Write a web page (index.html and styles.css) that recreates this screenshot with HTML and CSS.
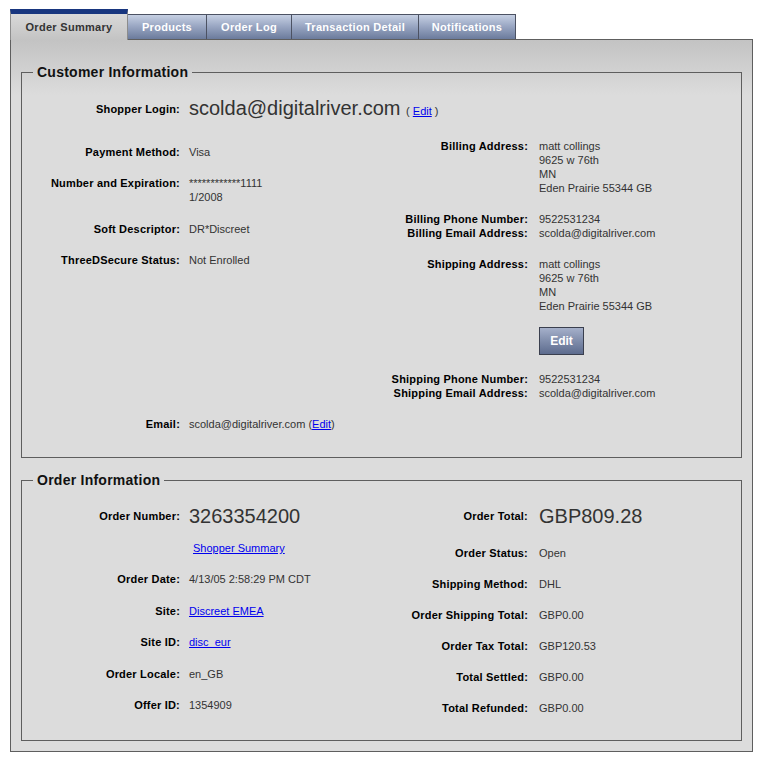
FILE: index.html
```html
<!DOCTYPE html>
<html>
<head>
<meta charset="utf-8">
<title>Order Summary</title>
<link rel="stylesheet" href="styles.css">
</head>
<body>
<div class="page">
  <ul class="tabs">
    <li class="tab active tab-summary">Order Summary</li>
    <li class="tab tab-products">Products</li>
    <li class="tab tab-log">Order Log</li>
    <li class="tab tab-detail">Transaction Detail</li>
    <li class="tab tab-notes">Notifications</li>
  </ul>
  <div class="panel">
    <fieldset class="group customer">
      <legend>Customer Information</legend>
      <div class="body">
        <div class="row big">
          <div class="label">Shopper Login:</div>
          <div class="value big-value">scolda@digitalriver.com <span class="small">( <a href="#">Edit</a> )</span></div>
        </div>
        <div class="cols">
          <div class="col left">
            <div class="row"><div class="label">Payment Method:</div><div class="value">Visa</div></div>
            <div class="row"><div class="label">Number and Expiration:</div><div class="value">************1111<br>1/2008</div></div>
            <div class="row gap-plus"><div class="label">Soft Descriptor:</div><div class="value">DR*Discreet</div></div>
            <div class="row"><div class="label">ThreeDSecure Status:</div><div class="value">Not Enrolled</div></div>
          </div>
          <div class="col right">
            <div class="row"><div class="label">Billing Address:</div><div class="value">matt collings<br>9625 w 76th<br>MN<br>Eden Prairie 55344 GB</div></div>
            <div class="stack">
              <div class="row"><div class="label">Billing Phone Number:</div><div class="value">9522531234</div></div>
              <div class="row"><div class="label">Billing Email Address:</div><div class="value">scolda@digitalriver.com</div></div>
            </div>
            <div class="stack">
              <div class="row"><div class="label">Shipping Address:</div><div class="value">matt collings<br>9625 w 76th<br>MN<br>Eden Prairie 55344 GB</div></div>
              <div class="row button-row"><div class="label"></div><div class="value"><button class="btn" type="button">Edit</button></div></div>
            </div>
            <div class="stack">
              <div class="row"><div class="label">Shipping Phone Number:</div><div class="value">9522531234</div></div>
              <div class="row"><div class="label">Shipping Email Address:</div><div class="value">scolda@digitalriver.com</div></div>
            </div>
          </div>
        </div>
        <div class="row email-row"><div class="label">Email:</div><div class="value">scolda@digitalriver.com (<a href="#">Edit</a>)</div></div>
      </div>
    </fieldset>

    <fieldset class="group order">
      <legend>Order Information</legend>
      <div class="body">
        <div class="cols">
          <div class="col left">
            <div class="row big"><div class="label">Order Number:</div><div class="value big-value">3263354200</div></div>
            <div class="row"><div class="label"></div><div class="value indent"><a href="#">Shopper Summary</a></div></div>
            <div class="row"><div class="label">Order Date:</div><div class="value">4/13/05 2:58:29 PM CDT</div></div>
            <div class="row"><div class="label">Site:</div><div class="value"><a href="#">Discreet EMEA</a></div></div>
            <div class="row"><div class="label">Site ID:</div><div class="value"><a href="#">disc_eur</a></div></div>
            <div class="row"><div class="label">Order Locale:</div><div class="value">en_GB</div></div>
            <div class="row"><div class="label">Offer ID:</div><div class="value">1354909</div></div>
          </div>
          <div class="col right">
            <div class="row big"><div class="label">Order Total:</div><div class="value big-value">GBP809.28</div></div>
            <div class="row"><div class="label">Order Status:</div><div class="value">Open</div></div>
            <div class="row"><div class="label">Shipping Method:</div><div class="value">DHL</div></div>
            <div class="row"><div class="label">Order Shipping Total:</div><div class="value">GBP0.00</div></div>
            <div class="row"><div class="label">Order Tax Total:</div><div class="value">GBP120.53</div></div>
            <div class="row"><div class="label">Total Settled:</div><div class="value">GBP0.00</div></div>
            <div class="row"><div class="label">Total Refunded:</div><div class="value">GBP0.00</div></div>
          </div>
        </div>
      </div>
    </fieldset>
  </div>
</div>
</body>
</html>
```

FILE: styles.css
```css
html, body {
  margin: 0;
  padding: 0;
  background: #ffffff;
}

body {
  font-family: "Liberation Sans", Arial, sans-serif;
  color: #333333;
}

.page {
  padding: 9px 0 0 10px;
  width: 743px;
}

/* ---------- tabs ---------- */
.tabs {
  display: flex;
  align-items: flex-end;
  height: 30px;
  margin: 0;
  padding: 0;
  list-style: none;
}

.tab {
  box-sizing: border-box;
  height: 25px;
  margin-left: -1px;
  border: 1px solid #4c5263;
  border-bottom: none;
  background: linear-gradient(#c6d0e3 0%, #9ba8c4 45%, #6b7b9c 100%);
  color: #ffffff;
  font-size: 11px;
  font-weight: bold;
  letter-spacing: 0.3px;
  display: flex;
  align-items: center;
  justify-content: center;
  white-space: nowrap;
}

.tab.active {
  position: relative;
  z-index: 1;
  height: 31px;
  margin-left: 0;
  margin-bottom: -1px;
  border: 1px solid #8c8c8c;
  border-top: 5px solid #18367f;
  border-bottom: none;
  background: linear-gradient(#d9d9d9, #c3c3c3);
  color: #333333;
}

.tab-summary { width: 118px; }
.tab-products { width: 80px; }
.tab-log { width: 86px; }
.tab-detail { width: 128px; }
.tab-notes { width: 98px; }

/* ---------- panel ---------- */
.panel {
  box-sizing: border-box;
  width: 743px;
  border: 1px solid #5e5e5e;
  background-color: #dcdcdc;
  background-image: linear-gradient(#c3c3c3, #dcdcdc 55px);
  background-repeat: no-repeat;
  padding: 23px 10px 10px;
}

.group {
  margin: 0;
  padding: 0 0 26px;
  border: 1px solid #5e5e5e;
  min-width: 0;
}

.group.order {
  margin-top: 13px;
  padding-bottom: 25px;
}

.group legend {
  margin-left: 11px;
  padding: 0 4px;
  font-size: 14px;
  line-height: 18px;
  font-weight: bold;
  letter-spacing: 0.25px;
  color: #111111;
}

.body {
  display: flex;
  flex-direction: column;
  padding-top: 16px;
}

.order .body {
  padding-top: 15px;
}

/* ---------- rows ---------- */
.row {
  display: flex;
  align-items: flex-start;
  font-size: 11px;
  line-height: 14px;
}

.label {
  flex: none;
  width: 158px;
  text-align: right;
  font-weight: bold;
  letter-spacing: 0.2px;
  color: #000000;
}

.value {
  padding-left: 9px;
  color: #333333;
  white-space: nowrap;
}

.row.big {
  height: 24px;
  align-items: center;
}

.big-value {
  font-size: 20px;
  line-height: 24px;
  color: #333333;
}

.small {
  font-size: 11px;
}

a {
  color: #0000ee;
  text-decoration: underline;
}

.indent {
  padding-left: 13px;
}

.cols {
  display: flex;
}

.customer .cols {
  margin-top: 18px;
}

.col {
  display: flex;
  flex-direction: column;
  gap: 17px;
}

.col.left {
  width: 350px;
  flex: none;
}

.customer .col.left {
  padding-top: 6px;
}

.col.right {
  flex: 1;
}

.col.right .label {
  width: 156px;
}

.col.right .value {
  padding-left: 11px;
}

.row.gap-plus {
  margin-top: 1px;
}

.stack {
  display: flex;
  flex-direction: column;
}

.button-row {
  margin-top: 14px;
}

.btn {
  box-sizing: border-box;
  width: 45px;
  height: 28px;
  margin: 0;
  padding: 0;
  border: 1px solid #3a3f4e;
  background: linear-gradient(#a5b0ca 0%, #8390ae 45%, #5d6c8e 100%);
  color: #ffffff;
  font-family: "Liberation Sans", Arial, sans-serif;
  font-size: 12px;
  font-weight: bold;
  display: block;
}

.email-row {
  margin-top: 17px;
}

.order .col.left {
  gap: 17.4px;
}

.order .col.left .row.big {
  margin-bottom: -4.4px;
}

.order .col.right .row.big {
  margin-bottom: 1px;
}
```
